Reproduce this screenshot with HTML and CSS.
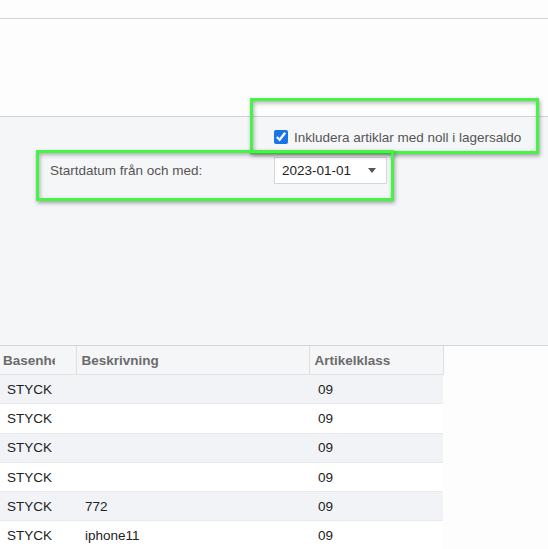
FILE: index.html
```html
<!DOCTYPE html>
<html lang="sv">
<head>
<meta charset="utf-8">
<title>Lagersaldo</title>
<link rel="stylesheet" href="styles.css">
</head>
<body>
<div class="topbar"></div>
<div class="headspace"></div>
<section class="panel">
  <div class="form">
    <div class="form-label"></div>
    <label class="check">
      <input type="checkbox" checked>
      <span>Inkludera artiklar med noll i lagersaldo</span>
    </label>
    <div class="form-label">Startdatum från och med:</div>
    <div class="select">
      <span>2023-01-01</span>
      <svg class="caret" width="8" height="5" viewBox="0 0 8 5"><path d="M0 0H8L4 5Z" fill="#555"/></svg>
    </div>
  </div>
</section>
<section class="grid-wrap">
  <table class="grid">
    <colgroup><col class="c1"><col class="c2"><col class="c3"></colgroup>
    <thead>
      <tr><th><span class="clip">Basenhet</span></th><th>Beskrivning</th><th>Artikelklass</th></tr>
    </thead>
    <tbody>
      <tr><td>STYCK</td><td></td><td>09</td></tr>
      <tr><td>STYCK</td><td></td><td>09</td></tr>
      <tr><td>STYCK</td><td></td><td>09</td></tr>
      <tr><td>STYCK</td><td></td><td>09</td></tr>
      <tr><td>STYCK</td><td>772</td><td>09</td></tr>
      <tr><td>STYCK</td><td>iphone11</td><td>09</td></tr>
    </tbody>
  </table>
</section>
<div class="mark mark-1"></div>
<div class="mark mark-2"></div>
</body>
</html>
```
FILE: styles.css
```css
html, body {
  margin: 0;
  padding: 0;
  background: #fdfdfd;
  font-family: "Liberation Sans", Arial, sans-serif;
  font-size: 13.5px;
  overflow: hidden;
}
.topbar {
  height: 18px;
  border-bottom: 1px solid #d3d3d3;
}
.headspace {
  height: 97px;
  border-bottom: 1px solid #d3d3d3;
}
.panel {
  background: #f5f6f8;
  height: 228px;
  box-sizing: border-box;
  padding: 13px 0 0 50px;
}
.form {
  display: grid;
  grid-template-columns: 224px auto;
  row-gap: 13px;
  align-items: center;
}
.form-label {
  color: #555;
}
.check {
  display: flex;
  align-items: center;
  gap: 6px;
  color: #555;
  height: 14px;
}
.check input {
  width: 14px;
  height: 14px;
  margin: 0;
  accent-color: #1a73e8;
}
.select {
  width: 113px;
  height: 27px;
  box-sizing: border-box;
  border: 1px solid #d6d6d6;
  background: #fff;
  display: flex;
  align-items: center;
  justify-content: space-between;
  padding: 0 10px 0 7px;
  color: #222;
}
.caret { display: block; }
.grid-wrap {
  border-top: 1px solid #d6d6d6;
  background: #fdfdfd;
}
.grid {
  border-collapse: collapse;
  table-layout: fixed;
  width: 446px;
  margin-left: -3px;
}
.c1 { width: 79px; }
.c2 { width: 233px; }
.c3 { width: 134px; }
.grid th {
  height: 28px;
  background: #f5f6f8;
  color: #6b6b6b;
  font-weight: bold;
  text-align: left;
  padding: 0 0 0 5px;
  border-right: 1px solid #dedede;
  border-bottom: 1px solid #e2e2e2;
  white-space: nowrap;
  overflow: hidden;
}
.grid th .clip {
  display: block;
  width: 52px;
  overflow: hidden;
  margin-left: 1px;
}
.grid td {
  height: 28.3px;
  padding: 0 0 0 9px;
  color: #222;
  border-bottom: 1px solid #e8eaee;
  white-space: nowrap;
}
.grid td:first-child { padding-left: 10px; }
.grid tbody tr:nth-child(odd) td { background: #f1f3f7; }
.grid tbody tr:nth-child(even) td { background: #ffffff; }
.mark {
  position: absolute;
  box-sizing: border-box;
  border: 3px solid #45f545;
  box-shadow: 1px 2px 4px rgba(0,0,0,0.35), inset 1px 2px 4px rgba(0,0,0,0.3);
}
.mark-1 { left: 250px; top: 98px; width: 289px; height: 56px; }
.mark-2 { left: 36px; top: 150px; width: 358px; height: 51px; }
```
